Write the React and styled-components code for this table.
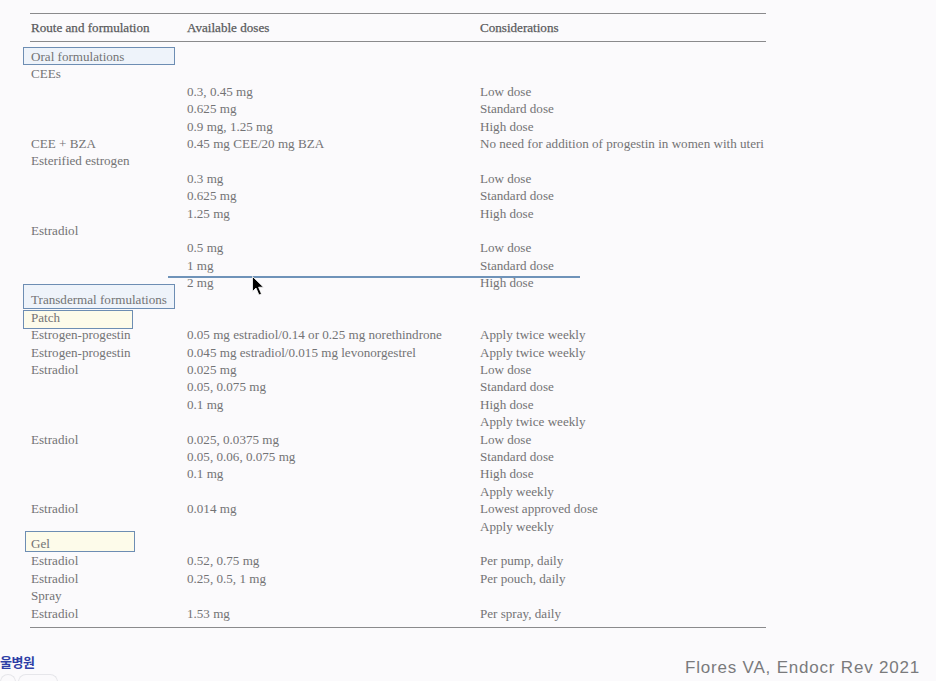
import styled, { createGlobalStyle } from 'styled-components'

const GlobalStyle = createGlobalStyle`
  html, body {
    margin: 0;
    padding: 0;
    background: #fbfafc;
  }
  body {
    width: 936px;
    height: 681px;
    overflow: hidden;
    font-family: "Liberation Serif", "DejaVu Serif", serif;
  }
`

// [route, doses, considerations, highlight]
const rows = [
  ['Oral formulations', '', '', 'oral'],
  ['CEEs', '', ''],
  ['', '0.3, 0.45 mg', 'Low dose'],
  ['', '0.625 mg', 'Standard dose'],
  ['', '0.9 mg, 1.25 mg', 'High dose'],
  ['CEE + BZA', '0.45 mg CEE/20 mg BZA', 'No need for addition of progestin in women with uteri'],
  ['Esterified estrogen', '', ''],
  ['', '0.3 mg', 'Low dose'],
  ['', '0.625 mg', 'Standard dose'],
  ['', '1.25 mg', 'High dose'],
  ['Estradiol', '', ''],
  ['', '0.5 mg', 'Low dose'],
  ['', '1 mg', 'Standard dose'],
  ['', '2 mg', 'High dose'],
  ['Transdermal formulations', '', '', 'trans'],
  ['Patch', '', '', 'patch'],
  ['Estrogen-progestin', '0.05 mg estradiol/0.14 or 0.25 mg norethindrone', 'Apply twice weekly'],
  ['Estrogen-progestin', '0.045 mg estradiol/0.015 mg levonorgestrel', 'Apply twice weekly'],
  ['Estradiol', '0.025 mg', 'Low dose'],
  ['', '0.05, 0.075 mg', 'Standard dose'],
  ['', '0.1 mg', 'High dose'],
  ['', '', 'Apply twice weekly'],
  ['Estradiol', '0.025, 0.0375 mg', 'Low dose'],
  ['', '0.05, 0.06, 0.075 mg', 'Standard dose'],
  ['', '0.1 mg', 'High dose'],
  ['', '', 'Apply weekly'],
  ['Estradiol', '0.014 mg', 'Lowest approved dose'],
  ['', '', 'Apply weekly'],
  ['Gel', '', '', 'gel'],
  ['Estradiol', '0.52, 0.75 mg', 'Per pump, daily'],
  ['Estradiol', '0.25, 0.5, 1 mg', 'Per pouch, daily'],
  ['Spray', '', ''],
  ['Estradiol', '1.53 mg', 'Per spray, daily'],
]

const boxes = {
  oral: { left: -7, top: -10, width: 152, height: 18, fill: '#eef3fa' },
  trans: { left: -7, top: -16, width: 152, height: 25, fill: '#eef3fa' },
  patch: { left: -7, top: -8, width: 110, height: 19, fill: '#fdfbea' },
  gel: { left: -5, top: -13, width: 110, height: 21, fill: '#fdfbea' },
}

const App = () => {
  return (
    <>
      <GlobalStyle />
      <Page>
        <Table>
          <HeaderRow>
            <HeadCell>Route and formulation</HeadCell>
            <HeadCell>Available doses</HeadCell>
            <HeadCell>Considerations</HeadCell>
          </HeaderRow>
          <Body>
            { rows.map( ( [route, dose, note, mark], idx ) => (
              <Row key={idx}>
                <Cell>
                  { mark && <Box $b={boxes[mark]} /> }
                  <Label>{route}</Label>
                </Cell>
                <Cell>{dose}</Cell>
                <Cell>{note}</Cell>
              </Row>
            ))}
            <PenLine />
            <Cursor viewBox="0 0 12 20" width="12" height="20">
              <path d="M0.5 0.5 L0.5 15.5 L4 12 L7 19 L9.5 18 L6.6 11.2 L11.5 11.2 Z" fill="#000" stroke="#fff" strokeWidth="0.8" />
            </Cursor>
          </Body>
        </Table>
        <Footer>
          <Hospital>
            <HospitalName>울병원</HospitalName>
            <Rings>
              <Ring $w={14} />
              <Ring $w={38} />
            </Rings>
          </Hospital>
          <Citation>Flores VA, Endocr Rev 2021</Citation>
        </Footer>
      </Page>
    </>
  )
}

const Page = styled.div`
  display: flex;
  flex-direction: column;
  width: 936px;
  height: 681px;
  padding-top: 13px;
  box-sizing: border-box;
`

const Table = styled.div`
  margin-left: 30px;
  width: 736px;
  border-top: 1.5px solid #8a8a8c;
  border-bottom: 1.5px solid #8a8a8c;
  color: #737375;
  font-size: 13.1px;
`

const HeaderRow = styled.div`
  display: grid;
  grid-template-columns: 156px 293px 1fr;
  align-items: center;
  height: 27px;
  border-bottom: 1.5px solid #8a8a8c;
  color: #5a5a5c;
`

const HeadCell = styled.div`
  padding-left: 1px;
  padding-top: 1px;
  -webkit-text-stroke: 0.25px #5a5a5c;
`

const Body = styled.div`
  position: relative;
  padding: 6px 0 5px;
`

const Row = styled.div`
  display: grid;
  grid-template-columns: 156px 293px 1fr;
  align-items: center;
  height: 17.4px;
`

const Cell = styled.div`
  position: relative;
  padding-left: 1px;
  white-space: nowrap;
  overflow: hidden;
  line-height: 17.4px;
  &:first-child {
    overflow: visible;
  }
`

const Label = styled.span`
  position: relative;
`

const Box = styled.span`
  position: absolute;
  left: ${p => p.$b.left}px;
  top: ${p => 8.7 + p.$b.top}px;
  width: ${p => p.$b.width}px;
  height: ${p => p.$b.height}px;
  background: ${p => p.$b.fill};
  border: 1.5px solid #6d8db3;
  box-sizing: border-box;
`

const PenLine = styled.div`
  position: absolute;
  left: 138px;
  width: 412px;
  top: 234px;
  height: 2px;
  background: #6f93b9;
`

const Cursor = styled.svg`
  position: absolute;
  left: 222px;
  top: 234px;
`

const Footer = styled.div`
  display: flex;
  justify-content: space-between;
  align-items: flex-start;
  margin-top: 26px;
`

const Hospital = styled.div`
  display: flex;
  flex-direction: column;
`

const HospitalName = styled.div`
  font-family: "Noto Sans CJK KR", sans-serif;
  font-weight: 700;
  font-size: 13px;
  line-height: 16px;
  color: #2e3fa6;
  letter-spacing: -0.5px;
`

const Rings = styled.div`
  display: flex;
  gap: 2px;
  margin-top: 4px;
`

const Ring = styled.div`
  width: ${p => p.$w}px;
  height: 14px;
  border: 1px solid #e6e6ea;
  border-bottom: none;
  border-radius: 8px 8px 0 0;
`

const Citation = styled.div`
  margin-top: 4px;
  margin-right: 16px;
  font-family: "Liberation Sans", Arial, sans-serif;
  font-size: 17px;
  line-height: 20px;
  letter-spacing: 0.8px;
  color: #7a7a7c;
`

export default App
